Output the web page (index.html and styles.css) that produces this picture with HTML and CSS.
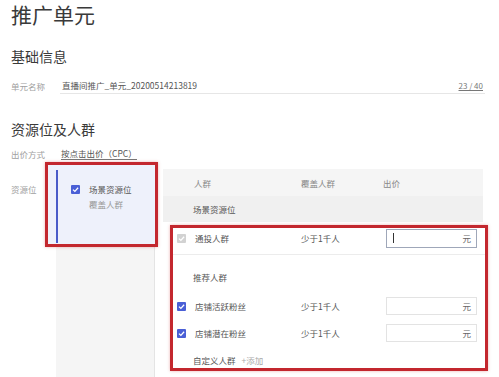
FILE: index.html
```html
<!DOCTYPE html>
<html lang="zh-CN">
<head>
  <meta charset="UTF-8">
  <meta name="viewport" content="width=device-width, initial-scale=1.0">
  <title>推广单元</title>
  <link rel="stylesheet" href="styles.css">
</head>
<body>
  <div class="page">
    <h1 class="page-title">推广单元</h1>

    <h2 class="section-title">基础信息</h2>
    <div class="form-row">
      <span class="form-label">单元名称</span>
      <div class="text-field">
        <span class="text-value">直播间推广_单元_20200514213819</span>
        <span class="text-count">23 / 40</span>
      </div>
    </div>

    <h2 class="section-title section-title--second">资源位及人群</h2>
    <div class="form-row form-row--bid">
      <span class="form-label">出价方式</span>
      <span class="bid-mode">按点击出价（CPC）</span>
    </div>

    <div class="resource-row">
      <span class="form-label resource-label">资源位</span>

      <div class="resource-tabs">
        <div class="resource-tab active">
          <div class="tab-body">
            <span class="checkbox checked">
              <svg viewBox="0 0 10 10"><path d="M2.2 5.1 L4.3 7.1 L7.9 3.1"/></svg>
            </span>
            <div class="tab-text">
              <div class="tab-name">场景资源位</div>
              <div class="tab-sub">覆盖人群</div>
            </div>
          </div>
        </div>
      </div>

      <div class="crowd-table">
        <div class="crowd-head">
          <span class="col-name">人群</span>
          <span class="col-cover">覆盖人群</span>
          <span>出价</span>
        </div>
        <div class="crowd-group">场景资源位</div>

        <div class="highlight">
          <div class="crowd-row crowd-row--first">
            <span class="checkbox disabled">
              <svg viewBox="0 0 10 10"><path d="M2.2 5.1 L4.3 7.1 L7.9 3.1"/></svg>
            </span>
            <span class="row-name">通投人群</span>
            <span class="row-cover">少于1千人</span>
            <div class="bid-input focused">
              <span class="caret"></span>
              <span class="unit">元</span>
            </div>
          </div>

          <div class="crowd-subtitle">推荐人群</div>

          <div class="crowd-row">
            <span class="checkbox checked">
              <svg viewBox="0 0 10 10"><path d="M2.2 5.1 L4.3 7.1 L7.9 3.1"/></svg>
            </span>
            <span class="row-name">店铺活跃粉丝</span>
            <span class="row-cover">少于1千人</span>
            <div class="bid-input">
              <span class="unit">元</span>
            </div>
          </div>

          <div class="crowd-row crowd-row--next">
            <span class="checkbox checked">
              <svg viewBox="0 0 10 10"><path d="M2.2 5.1 L4.3 7.1 L7.9 3.1"/></svg>
            </span>
            <span class="row-name">店铺潜在粉丝</span>
            <span class="row-cover">少于1千人</span>
            <div class="bid-input">
              <span class="unit">元</span>
            </div>
          </div>

          <div class="crowd-custom">
            自定义人群<span class="add-link">+添加</span>
          </div>
        </div>
      </div>
    </div>
  </div>
</body>
</html>
```

FILE: styles.css
```css
body {
  margin: 0;
  font-family: "Noto Sans CJK SC", "Noto Sans", sans-serif;
  background-color: #ffffff;
  color: #555;
  overflow: hidden;
}

.page {
  padding: 0 14px 0 11px;
}

.page-title {
  margin: 0;
  font-size: 21px;
  line-height: 28px;
  font-weight: normal;
  color: #3a3a3a;
}

.section-title {
  margin: 18px 0 0;
  font-size: 14px;
  line-height: 20px;
  font-weight: normal;
  color: #3a3a3a;
}

.section-title--second {
  margin-top: 25px;
}

.form-row {
  display: flex;
  align-items: center;
  margin-top: 11px;
  font-size: 8.5px;
}

.form-row--bid {
  margin-top: 6px;
  height: 17px;
}

.form-label {
  width: 49px;
  flex-shrink: 0;
  color: #a0a0a0;
  font-size: 8.5px;
}

.text-field {
  flex: 1;
  display: flex;
  align-items: center;
  height: 16px;
  padding-left: 2px;
  border-bottom: 1px solid #e6e6e6;
}

.text-value {
  color: #555;
}

.text-count {
  margin-left: auto;
  margin-right: 2px;
  white-space: nowrap;
  font-size: 8px;
  color: #777;
  text-decoration: underline;
}

.bid-mode {
  display: inline-block;
  margin-left: 1px;
  line-height: 11px;
  color: #555;
  border-bottom: 1px solid #777;
}

.resource-row {
  display: flex;
  align-items: flex-start;
  margin-top: 3px;
  font-size: 8.5px;
}

.resource-label {
  width: 45px;
  padding-top: 17px;
  line-height: 14px;
}

.resource-tabs {
  width: 99px;
  height: 215px;
  box-sizing: border-box;
  margin-right: 8px;
  background-color: #f5f5f5;
  border-right: 1px solid #e4e4e4;
}

.resource-tab {
  position: relative;
  z-index: 1;
  height: 85px;
  box-sizing: border-box;
  margin: -3px -4px 0 -11px;
  padding: 5px 0 1px 8px;
  display: flex;
  background-color: #eef1fb;
  border: 3px solid #c3272e;
  box-shadow: 0 0 3px rgba(200, 40, 40, 0.35);
}

.tab-body {
  flex: 1;
  display: flex;
  align-items: flex-start;
  padding: 15px 0 0 13px;
  border-left: 2px solid #4a5bc8;
}

.tab-text {
  margin-top: -3px;
  line-height: 15px;
}

.tab-name {
  color: #555;
}

.tab-sub {
  color: #999;
}

.checkbox {
  width: 9px;
  height: 9px;
  flex-shrink: 0;
  margin-right: 9px;
  border-radius: 1px;
  display: flex;
}

.checkbox svg {
  width: 9px;
  height: 9px;
}

.checkbox path {
  fill: none;
  stroke: #ffffff;
  stroke-width: 1.4;
}

.checkbox.checked {
  background-color: #4a5fd6;
}

.checkbox.disabled {
  background-color: #d2d2d2;
}

.crowd-table {
  width: 320px;
  margin-top: 4px;
}

.crowd-head {
  display: flex;
  align-items: center;
  height: 27px;
  padding-left: 31px;
  background-color: #f5f5f5;
  color: #888;
}

.col-name {
  width: 107px;
}

.col-cover {
  width: 82px;
}

.crowd-group {
  height: 26px;
  line-height: 26px;
  padding-left: 30px;
  background-color: #f0f0f0;
  color: #555;
}

.highlight {
  margin: 3px -5px 0 7px;
  border: 3px solid #c3272e;
  box-shadow: 0 0 3px rgba(200, 40, 40, 0.35);
}

.crowd-row {
  display: flex;
  align-items: center;
  height: 18px;
  margin-top: 13px;
  padding-left: 4px;
}

.crowd-row--first {
  height: 20px;
  margin-top: 0;
  padding-bottom: 6px;
  border-bottom: 1px solid #ececec;
}

.crowd-row--next {
  margin-top: 9px;
}

.row-name {
  width: 106px;
  color: #555;
}

.row-cover {
  width: 85px;
  color: #555;
}

.bid-input {
  width: 91px;
  height: 100%;
  box-sizing: border-box;
  display: flex;
  align-items: center;
  padding: 0 5px 0 6px;
  border: 1px solid #e3e3e3;
}

.bid-input.focused {
  height: 19px;
  border-color: #9fa7b9;
}

.caret {
  width: 1px;
  height: 10px;
  background-color: #333;
}

.unit {
  margin-left: auto;
  color: #666;
}

.crowd-subtitle {
  padding: 15px 0 0 20px;
  line-height: 14px;
  color: #555;
}

.crowd-custom {
  margin-top: 12px;
  padding: 0 0 1px 20px;
  line-height: 13px;
  color: #555;
}

.add-link {
  margin-left: 6px;
  color: #aaa;
}
```
